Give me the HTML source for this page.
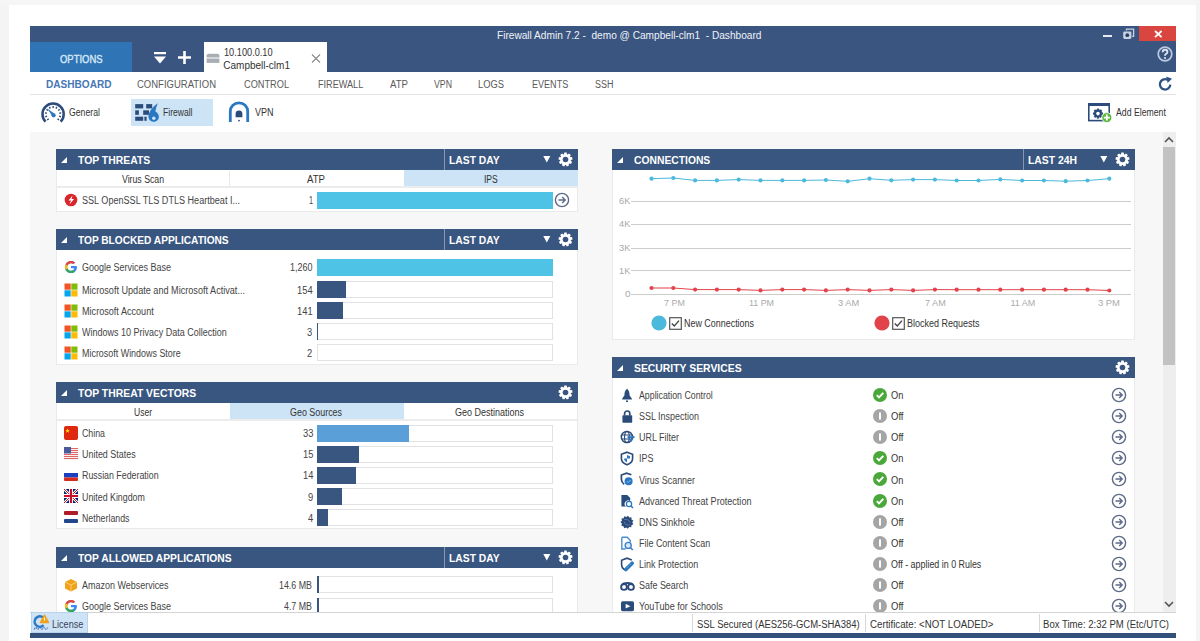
<!DOCTYPE html>
<html><head><meta charset="utf-8">
<style>
*{box-sizing:border-box;margin:0;padding:0}
html,body{width:1200px;height:641px;overflow:hidden;background:#fff;font-family:"Liberation Sans",sans-serif;color:#444;position:relative}
.a{position:absolute}
.t{position:absolute;white-space:pre;line-height:1;transform-origin:0 50%}
</style></head><body>
<div class="a" style="left:0px;top:0px;width:9px;height:641px;background:#f4f4f4;"></div>
<div class="a" style="left:0px;top:0px;width:1200px;height:5px;background:#f6f6f6;"></div>
<div class="a" style="left:1196px;top:0px;width:4px;height:641px;background:#f4f4f4;"></div>
<div class="a" style="left:30px;top:26px;width:1146px;height:46px;background:#3a5580;"></div>
<div class="t" style="left:497.30px;top:31.12px;font-size:10px;color:#f0f3f8;transform:scaleX(1.0116);">Firewall Admin 7.2 -  demo @ Campbell-clm1  - Dashboard</div>
<div class="a" style="left:1103px;top:35px;width:9px;height:2px;background:#e6ebf2;"></div>
<svg class="a" style="left:1122px;top:28px" width="13" height="12" viewBox="0 0 13 12"><path d="M4.5 2.5 V1.2 H11.6 V8.3 H10.2" fill="none" stroke="#c9d3e2" stroke-width="1.3"/><rect x="1.2" y="3.4" width="8.2" height="7.6" rx="1.4" fill="#c9d3e2"/><circle cx="5.3" cy="7.2" r="1.9" fill="#2b4068"/></svg>
<div class="a" style="left:1139px;top:26px;width:37px;height:14.5px;background:#d9463f;"></div>
<svg class="a" style="left:1154px;top:30px" width="9" height="8" viewBox="0 0 9 8"><path d="M1 1 L7.6 7.2 M7.6 1 L1 7.2" stroke="#fff" stroke-width="1.8"/></svg>
<svg class="a" style="left:1157px;top:46px" width="16" height="16" viewBox="0 0 16 16"><circle cx="8" cy="8" r="6.8" fill="none" stroke="#bccade" stroke-width="1.7"/><path d="M5.7 6.2 Q5.7 3.8 8 3.8 Q10.4 3.8 10.4 6 Q10.4 7.3 8.9 8 Q8 8.5 8 9.7" fill="none" stroke="#dde5f0" stroke-width="1.9"/><circle cx="8" cy="12" r="1.1" fill="#dde5f0"/></svg>
<div class="a" style="left:30px;top:42px;width:102px;height:30px;background:#2f74b5;"></div>
<div class="t" style="left:59.75px;top:53.88px;font-size:11.5px;color:#d8e8f8;transform:scaleX(0.8212);-webkit-text-stroke:0.4px #d8e8f8">OPTIONS</div>
<svg class="a" style="left:153px;top:51px" width="14" height="14" viewBox="0 0 14 14"><rect x="1" y="1" width="12" height="2.2" fill="#fff"/><path d="M1 5.5 L13 5.5 L7 12.5 Z" fill="#fff"/></svg>
<svg class="a" style="left:177px;top:50px" width="15" height="15" viewBox="0 0 15 15"><path d="M7.5 1 V14 M1 7.5 H14" stroke="#fff" stroke-width="2.6"/></svg>
<div class="a" style="left:204px;top:42px;width:123px;height:30px;background:#fff;"></div>
<svg class="a" style="left:206px;top:53px" width="14" height="11" viewBox="0 0 14 11"><path d="M0.6 4.6 V2.6 Q0.6 0.8 2.6 0.8 H11.4 Q13.4 0.8 13.4 2.6 V4.6 Z" fill="#a9aeb4"/><rect x="0.6" y="5.5" width="12.8" height="4.4" fill="#a9aeb4"/></svg>
<div class="t" style="left:224.00px;top:47.57px;font-size:10.3px;color:#333;transform:scaleX(0.8932);">10.100.0.10</div>
<div class="t" style="left:223.30px;top:61.41px;font-size:10px;color:#333;">Campbell-clm1</div>
<svg class="a" style="left:311px;top:54px" width="10" height="9" viewBox="0 0 10 9"><path d="M1 0.5 L9 8.5 M9 0.5 L1 8.5" stroke="#8a8a8a" stroke-width="1.1"/></svg>
<div class="t" style="left:45.50px;top:80.11px;font-size:10px;color:#4677b5;font-weight:bold;transform:scaleX(1.0077);">DASHBOARD</div>
<div class="t" style="left:137.00px;top:80.11px;font-size:10px;color:#5a5a5a;transform:scaleX(0.9502);">CONFIGURATION</div>
<div class="t" style="left:244.00px;top:80.11px;font-size:10px;color:#5a5a5a;transform:scaleX(0.9204);">CONTROL</div>
<div class="t" style="left:317.50px;top:80.11px;font-size:10px;color:#5a5a5a;transform:scaleX(0.9106);">FIREWALL</div>
<div class="t" style="left:389.80px;top:80.11px;font-size:10px;color:#5a5a5a;transform:scaleX(0.9622);">ATP</div>
<div class="t" style="left:433.50px;top:80.11px;font-size:10px;color:#5a5a5a;transform:scaleX(0.8754);">VPN</div>
<div class="t" style="left:478.00px;top:80.11px;font-size:10px;color:#5a5a5a;transform:scaleX(0.9357);">LOGS</div>
<div class="t" style="left:531.80px;top:80.11px;font-size:10px;color:#5a5a5a;transform:scaleX(0.9048);">EVENTS</div>
<div class="t" style="left:595.00px;top:80.11px;font-size:10px;color:#5a5a5a;transform:scaleX(0.8949);">SSH</div>
<div class="a" style="left:30px;top:94px;width:1146px;height:1px;background:#e4e4e4;"></div>
<svg class="a" style="left:1158px;top:76px" width="16" height="16" viewBox="0 0 16 16"><path d="M12.3 8.6 A5.2 5.2 0 1 1 9.2 3.6" fill="none" stroke="#2f5285" stroke-width="2.3"/><path d="M8.2 0.6 L14 2.8 L9.6 7 Z" fill="#2f5285"/></svg>
<div class="a" style="left:131px;top:99px;width:82px;height:27px;background:#cde4f7;"></div>
<svg class="a" style="left:40px;top:101px" width="26" height="23" viewBox="0 0 26 23"><path d="M5.6 20.7 A10.6 10.6 0 1 1 20.6 20.7" fill="none" stroke="#2b4b7a" stroke-width="2.5"/><path d="M8.65 17.65 L7.30 19.00 M7.11 15.15 L5.30 15.73 M6.88 12.21 L5.00 11.92 M8.00 9.50 L6.47 8.38 M10.24 7.59 L9.38 5.89 M13.10 6.90 L13.10 5.00 M15.96 7.59 L16.82 5.89 M18.20 9.50 L19.73 8.38 M19.32 12.21 L21.20 11.92 M19.09 15.15 L20.90 15.73 M17.55 17.65 L18.90 19.00 " stroke="#2b4b7a" stroke-width="1.4"/><path d="M7 7.2 L14.9 13 L12.6 15.6 Z" fill="#2a78c2"/><circle cx="13.6" cy="14.3" r="2.1" fill="#2a78c2"/></svg>
<div class="t" style="left:68.70px;top:108.11px;font-size:10px;color:#333;transform:scaleX(0.8686);">General</div>
<svg class="a" style="left:134px;top:102px" width="26" height="21" viewBox="0 0 26 21"><g fill="#2b4b7a"><rect x="1.2" y="2.1" width="7.999999999999999" height="4.3"/><rect x="12.2" y="2.1" width="6.0" height="4.3"/><rect x="1.2" y="8.3" width="3.7" height="4.5"/><rect x="9.2" y="8.3" width="5.800000000000001" height="4.5"/><rect x="1.2" y="14.7" width="7.999999999999999" height="4.1"/><rect x="10.4" y="14.7" width="2.1999999999999993" height="4.1"/></g><path d="M23.8 1.2 C19.6 4 16.2 8 14.8 12 C13.6 15.6 15.4 19.8 19.6 19.8 C23.2 19.8 25.2 17 24.8 14 C24.5 11.8 23 10.4 21.4 9.6 C21.8 6.6 22.8 4 23.8 1.2 Z" fill="#2a78c2"/><circle cx="19.8" cy="16.2" r="1.7" fill="#cde4f7"/></svg>
<div class="t" style="left:163.00px;top:108.31px;font-size:10px;color:#333;transform:scaleX(0.8563);">Firewall</div>
<svg class="a" style="left:228px;top:100px" width="23" height="24" viewBox="0 0 23 24"><path d="M2.3 22 V11.5 A8.7 8.7 0 0 1 19.7 11.5 V22" fill="none" stroke="#2a78c2" stroke-width="2.8"/><path d="M7.6 17.3 V13.8 A3.4 3.4 0 0 1 14.4 13.8 V17.3 Z" fill="#2b4b7a"/><circle cx="11" cy="20.6" r="0.9" fill="#2b4b7a"/></svg>
<div class="t" style="left:255.00px;top:108.31px;font-size:10px;color:#333;transform:scaleX(0.9046);">VPN</div>
<svg class="a" style="left:1087px;top:102px" width="27" height="22" viewBox="0 0 27 22"><rect x="1.8" y="1.8" width="20.4" height="16.8" fill="#fff" stroke="#2b4b7a" stroke-width="1.6"/><rect x="1" y="1" width="22" height="3" fill="#2b4b7a"/><g transform="translate(11 11.6)"><circle r="2.9" fill="none" stroke="#2b4b7a" stroke-width="2.2"/><rect x="-1.1" y="-5" width="2.2" height="2.4" fill="#2b4b7a" transform="rotate(0)"/><rect x="-1.1" y="-5" width="2.2" height="2.4" fill="#2b4b7a" transform="rotate(45)"/><rect x="-1.1" y="-5" width="2.2" height="2.4" fill="#2b4b7a" transform="rotate(90)"/><rect x="-1.1" y="-5" width="2.2" height="2.4" fill="#2b4b7a" transform="rotate(135)"/><rect x="-1.1" y="-5" width="2.2" height="2.4" fill="#2b4b7a" transform="rotate(180)"/><rect x="-1.1" y="-5" width="2.2" height="2.4" fill="#2b4b7a" transform="rotate(225)"/><rect x="-1.1" y="-5" width="2.2" height="2.4" fill="#2b4b7a" transform="rotate(270)"/><rect x="-1.1" y="-5" width="2.2" height="2.4" fill="#2b4b7a" transform="rotate(315)"/></g><circle cx="19.8" cy="15.6" r="5" fill="#5cb63e" stroke="#fff" stroke-width="0.8"/><path d="M19.8 12.6 v6 M16.8 15.6 h6" stroke="#fff" stroke-width="1.8"/></svg>
<div class="t" style="left:1115.70px;top:108.41px;font-size:10px;color:#333;transform:scaleX(0.8698);">Add Element</div>
<div class="a" style="left:30px;top:132px;width:1146px;height:480px;background:#f7f7f7;"></div>
<div class="a" style="left:1163px;top:132px;width:13px;height:480px;background:#eeeeee;"></div>
<div class="a" style="left:1163px;top:147px;width:12px;height:218px;background:#c2c2c2;"></div>
<svg class="a" style="left:1164px;top:136px" width="10" height="7" viewBox="0 0 10 7"><path d="M1 6 L5 2 L9 6" fill="none" stroke="#555" stroke-width="1.6"/></svg>
<svg class="a" style="left:1164px;top:601px" width="10" height="7" viewBox="0 0 10 7"><path d="M1 1 L5 5 L9 1" fill="none" stroke="#555" stroke-width="1.6"/></svg>
<div class="a" style="left:56px;top:149px;width:522px;height:63px;background:#fff;border:1px solid #eaeaea"></div>
<div class="a" style="left:56px;top:149px;width:522px;height:21px;background:#385680;"></div>
<svg class="a" style="left:60px;top:156px" width="8" height="8" viewBox="0 0 8 8"><path d="M1 7 L7 7 L7 1 Z" fill="#fff"/></svg>
<div class="t" style="left:78.00px;top:156.22px;font-size:10.4px;color:#fff;font-weight:bold;">TOP THREATS</div>
<div class="a" style="left:443.5px;top:149px;width:1px;height:21px;background:#8797b0;"></div>
<div class="t" style="left:448.50px;top:156.22px;font-size:10.4px;color:#fff;font-weight:bold;transform:scaleX(0.9942);">LAST DAY</div>
<svg class="a" style="left:543px;top:155px" width="8" height="8" viewBox="0 0 8 8"><path d="M0.3 1 L7.3 1 L3.8 7.4 Z" fill="#fff"/></svg>
<svg class="a" style="left:558px;top:152px" width="15" height="15" viewBox="0 0 15 15"><g fill="#fff"><circle cx="7.5" cy="7.5" r="5.4"/><path d="M6.3 0.6 H8.7 L9.1 3 H5.9 Z" transform="rotate(0 7.5 7.5)"/><path d="M6.3 0.6 H8.7 L9.1 3 H5.9 Z" transform="rotate(40 7.5 7.5)"/><path d="M6.3 0.6 H8.7 L9.1 3 H5.9 Z" transform="rotate(80 7.5 7.5)"/><path d="M6.3 0.6 H8.7 L9.1 3 H5.9 Z" transform="rotate(120 7.5 7.5)"/><path d="M6.3 0.6 H8.7 L9.1 3 H5.9 Z" transform="rotate(160 7.5 7.5)"/><path d="M6.3 0.6 H8.7 L9.1 3 H5.9 Z" transform="rotate(200 7.5 7.5)"/><path d="M6.3 0.6 H8.7 L9.1 3 H5.9 Z" transform="rotate(240 7.5 7.5)"/><path d="M6.3 0.6 H8.7 L9.1 3 H5.9 Z" transform="rotate(280 7.5 7.5)"/><path d="M6.3 0.6 H8.7 L9.1 3 H5.9 Z" transform="rotate(320 7.5 7.5)"/></g><circle cx="7.5" cy="7.5" r="2.8" fill="#385680"/></svg>
<div class="a" style="left:404px;top:170px;width:174px;height:16px;background:#cde4f7;"></div>
<div class="a" style="left:229px;top:171px;width:1px;height:15px;background:#e8e8e8;"></div>
<div class="a" style="left:57px;top:186px;width:520px;height:2px;background:#ececec;"></div>
<div class="t" style="left:122.00px;top:175.12px;font-size:10px;color:#333;transform:scaleX(0.8718);">Virus Scan</div>
<div class="t" style="left:307.00px;top:175.12px;font-size:10px;color:#333;transform:scaleX(0.9622);">ATP</div>
<div class="t" style="left:483.73px;top:175.12px;font-size:10px;color:#333;transform:scaleX(0.8531);">IPS</div>
<svg class="a" style="left:64px;top:193px" width="14" height="14" viewBox="0 0 14 14"><circle cx="7" cy="7" r="6.3" fill="#d9262c"/><path d="M8.5 2.5 L4.5 7.5 L7 7.5 L5.5 11.5 L10 6 L7.5 6 Z" fill="#fff"/></svg>
<div class="t" style="left:82.00px;top:196.12px;font-size:10px;color:#444444;transform:scaleX(0.9072);">SSL OpenSSL TLS DTLS Heartbeat I...</div>
<div class="t" style="left:308.50px;top:196.12px;font-size:10px;color:#444444;transform:scaleX(0.7192);">1</div>
<div class="a" style="left:317px;top:192px;width:236px;height:17px;background:#4ec3e6;"></div>
<svg class="a" style="left:554px;top:192px" width="16" height="16" viewBox="0 0 16 16"><circle cx="8" cy="8" r="6.6" fill="none" stroke="#5d6a88" stroke-width="1.4"/><path d="M4.5 8 H11 M8.2 5 L11.2 8 L8.2 11" fill="none" stroke="#5d6a88" stroke-width="1.4"/></svg>
<div class="a" style="left:56px;top:229px;width:522px;height:136px;background:#fff;border:1px solid #eaeaea"></div>
<div class="a" style="left:56px;top:229px;width:522px;height:21px;background:#385680;"></div>
<svg class="a" style="left:60px;top:236px" width="8" height="8" viewBox="0 0 8 8"><path d="M1 7 L7 7 L7 1 Z" fill="#fff"/></svg>
<div class="t" style="left:78.00px;top:236.22px;font-size:10.4px;color:#fff;font-weight:bold;transform:scaleX(0.9759);">TOP BLOCKED APPLICATIONS</div>
<div class="a" style="left:443.5px;top:229px;width:1px;height:21px;background:#8797b0;"></div>
<div class="t" style="left:448.50px;top:236.22px;font-size:10.4px;color:#fff;font-weight:bold;transform:scaleX(0.9942);">LAST DAY</div>
<svg class="a" style="left:543px;top:235px" width="8" height="8" viewBox="0 0 8 8"><path d="M0.3 1 L7.3 1 L3.8 7.4 Z" fill="#fff"/></svg>
<svg class="a" style="left:558px;top:232px" width="15" height="15" viewBox="0 0 15 15"><g fill="#fff"><circle cx="7.5" cy="7.5" r="5.4"/><path d="M6.3 0.6 H8.7 L9.1 3 H5.9 Z" transform="rotate(0 7.5 7.5)"/><path d="M6.3 0.6 H8.7 L9.1 3 H5.9 Z" transform="rotate(40 7.5 7.5)"/><path d="M6.3 0.6 H8.7 L9.1 3 H5.9 Z" transform="rotate(80 7.5 7.5)"/><path d="M6.3 0.6 H8.7 L9.1 3 H5.9 Z" transform="rotate(120 7.5 7.5)"/><path d="M6.3 0.6 H8.7 L9.1 3 H5.9 Z" transform="rotate(160 7.5 7.5)"/><path d="M6.3 0.6 H8.7 L9.1 3 H5.9 Z" transform="rotate(200 7.5 7.5)"/><path d="M6.3 0.6 H8.7 L9.1 3 H5.9 Z" transform="rotate(240 7.5 7.5)"/><path d="M6.3 0.6 H8.7 L9.1 3 H5.9 Z" transform="rotate(280 7.5 7.5)"/><path d="M6.3 0.6 H8.7 L9.1 3 H5.9 Z" transform="rotate(320 7.5 7.5)"/></g><circle cx="7.5" cy="7.5" r="2.8" fill="#385680"/></svg>
<svg class="a" style="left:64px;top:260px" width="14" height="14" viewBox="0 0 14 14"><path d="M12.3 6 H7 V8.2 H10.2 C9.8 9.8 8.6 10.8 7 10.8 C4.9 10.8 3.2 9.1 3.2 7 C3.2 4.9 4.9 3.2 7 3.2 C8 3.2 8.8 3.5 9.5 4.1 L11.1 2.5 C10 1.5 8.6 0.9 7 0.9 C3.6 0.9 0.9 3.6 0.9 7 C0.9 10.4 3.6 13.1 7 13.1 C10.4 13.1 13 10.6 13 7 C13 6.6 12.9 6.3 12.3 6 Z" fill="#4285f4"/><path d="M1.6 4.2 L3.5 5.6 C4 4.2 5.4 3.2 7 3.2 C8 3.2 8.8 3.5 9.5 4.1 L11.1 2.5 C10 1.5 8.6 0.9 7 0.9 C4.6 0.9 2.6 2.2 1.6 4.2 Z" fill="#ea4335"/><path d="M1.6 4.2 C1.1 5 0.9 6 0.9 7 C0.9 8 1.1 9 1.6 9.8 L3.5 8.4 C3.3 8 3.2 7.5 3.2 7 C3.2 6.5 3.3 6 3.5 5.6 Z" fill="#fbbc05"/><path d="M1.6 9.8 C2.6 11.8 4.6 13.1 7 13.1 C8.6 13.1 10 12.6 11 11.7 L9.2 10.3 C8.6 10.6 7.9 10.8 7 10.8 C5.4 10.8 4 9.8 3.5 8.4 Z" fill="#34a853"/></svg>
<div class="t" style="left:81.50px;top:263.42px;font-size:10px;color:#444444;transform:scaleX(0.8995);">Google Services Base</div>
<div class="t" style="left:290.00px;top:263.42px;font-size:10px;color:#444444;transform:scaleX(0.8991);">1,260</div>
<div class="a" style="left:317px;top:259px;width:236px;height:17px;background:#fff;border:1px solid #e2e2e2"></div>
<div class="a" style="left:317px;top:259px;width:236px;height:17px;background:#4ec3e6;"></div>
<svg class="a" style="left:64px;top:283px" width="14" height="14" viewBox="0 0 14 14"><rect x="0.5" y="0.5" width="6.2" height="6.2" fill="#f35325"/><rect x="7.3" y="0.5" width="6.2" height="6.2" fill="#81bc06"/><rect x="0.5" y="7.3" width="6.2" height="6.2" fill="#05a6f0"/><rect x="7.3" y="7.3" width="6.2" height="6.2" fill="#ffba08"/></svg>
<div class="t" style="left:81.50px;top:285.72px;font-size:10px;color:#444444;transform:scaleX(0.9108);">Microsoft Update and Microsoft Activat...</div>
<div class="t" style="left:296.90px;top:285.72px;font-size:10px;color:#444444;transform:scaleX(0.9350);">154</div>
<div class="a" style="left:317px;top:281px;width:236px;height:17px;background:#fff;border:1px solid #e2e2e2"></div>
<div class="a" style="left:317px;top:281px;width:28.5px;height:17px;background:#385680;"></div>
<svg class="a" style="left:64px;top:304px" width="14" height="14" viewBox="0 0 14 14"><rect x="0.5" y="0.5" width="6.2" height="6.2" fill="#f35325"/><rect x="7.3" y="0.5" width="6.2" height="6.2" fill="#81bc06"/><rect x="0.5" y="7.3" width="6.2" height="6.2" fill="#05a6f0"/><rect x="7.3" y="7.3" width="6.2" height="6.2" fill="#ffba08"/></svg>
<div class="t" style="left:81.50px;top:306.81px;font-size:10px;color:#444444;transform:scaleX(0.9091);">Microsoft Account</div>
<div class="t" style="left:296.90px;top:306.81px;font-size:10px;color:#444444;transform:scaleX(0.9350);">141</div>
<div class="a" style="left:317px;top:302px;width:236px;height:17px;background:#fff;border:1px solid #e2e2e2"></div>
<div class="a" style="left:317px;top:302px;width:26px;height:17px;background:#385680;"></div>
<svg class="a" style="left:64px;top:325px" width="14" height="14" viewBox="0 0 14 14"><rect x="0.5" y="0.5" width="6.2" height="6.2" fill="#f35325"/><rect x="7.3" y="0.5" width="6.2" height="6.2" fill="#81bc06"/><rect x="0.5" y="7.3" width="6.2" height="6.2" fill="#05a6f0"/><rect x="7.3" y="7.3" width="6.2" height="6.2" fill="#ffba08"/></svg>
<div class="t" style="left:81.50px;top:327.81px;font-size:10px;color:#444444;transform:scaleX(0.9012);">Windows 10 Privacy Data Collection</div>
<div class="t" style="left:307.30px;top:327.81px;font-size:10px;color:#444444;transform:scaleX(0.9350);">3</div>
<div class="a" style="left:317px;top:323px;width:236px;height:17px;background:#fff;border:1px solid #e2e2e2"></div>
<div class="a" style="left:317px;top:323px;width:1px;height:17px;background:#385680;"></div>
<svg class="a" style="left:64px;top:346px" width="14" height="14" viewBox="0 0 14 14"><rect x="0.5" y="0.5" width="6.2" height="6.2" fill="#f35325"/><rect x="7.3" y="0.5" width="6.2" height="6.2" fill="#81bc06"/><rect x="0.5" y="7.3" width="6.2" height="6.2" fill="#05a6f0"/><rect x="7.3" y="7.3" width="6.2" height="6.2" fill="#ffba08"/></svg>
<div class="t" style="left:81.50px;top:348.62px;font-size:10px;color:#444444;transform:scaleX(0.8930);">Microsoft Windows Store</div>
<div class="t" style="left:307.30px;top:348.62px;font-size:10px;color:#444444;transform:scaleX(0.9350);">2</div>
<div class="a" style="left:317px;top:344px;width:236px;height:17px;background:#fff;border:1px solid #e2e2e2"></div>
<div class="a" style="left:56px;top:382px;width:522px;height:147px;background:#fff;border:1px solid #eaeaea"></div>
<div class="a" style="left:56px;top:382px;width:522px;height:21px;background:#385680;"></div>
<svg class="a" style="left:60px;top:389px" width="8" height="8" viewBox="0 0 8 8"><path d="M1 7 L7 7 L7 1 Z" fill="#fff"/></svg>
<div class="t" style="left:78.00px;top:389.22px;font-size:10.4px;color:#fff;font-weight:bold;">TOP THREAT VECTORS</div>
<svg class="a" style="left:558px;top:385px" width="15" height="15" viewBox="0 0 15 15"><g fill="#fff"><circle cx="7.5" cy="7.5" r="5.4"/><path d="M6.3 0.6 H8.7 L9.1 3 H5.9 Z" transform="rotate(0 7.5 7.5)"/><path d="M6.3 0.6 H8.7 L9.1 3 H5.9 Z" transform="rotate(40 7.5 7.5)"/><path d="M6.3 0.6 H8.7 L9.1 3 H5.9 Z" transform="rotate(80 7.5 7.5)"/><path d="M6.3 0.6 H8.7 L9.1 3 H5.9 Z" transform="rotate(120 7.5 7.5)"/><path d="M6.3 0.6 H8.7 L9.1 3 H5.9 Z" transform="rotate(160 7.5 7.5)"/><path d="M6.3 0.6 H8.7 L9.1 3 H5.9 Z" transform="rotate(200 7.5 7.5)"/><path d="M6.3 0.6 H8.7 L9.1 3 H5.9 Z" transform="rotate(240 7.5 7.5)"/><path d="M6.3 0.6 H8.7 L9.1 3 H5.9 Z" transform="rotate(280 7.5 7.5)"/><path d="M6.3 0.6 H8.7 L9.1 3 H5.9 Z" transform="rotate(320 7.5 7.5)"/></g><circle cx="7.5" cy="7.5" r="2.8" fill="#385680"/></svg>
<div class="a" style="left:230px;top:403px;width:174px;height:16px;background:#cde4f7;"></div>
<div class="a" style="left:57px;top:419px;width:520px;height:2px;background:#ececec;"></div>
<div class="t" style="left:133.50px;top:408.12px;font-size:10px;color:#333;transform:scaleX(0.8525);">User</div>
<div class="t" style="left:290.00px;top:408.12px;font-size:10px;color:#333;transform:scaleX(0.8910);">Geo Sources</div>
<div class="t" style="left:455.00px;top:408.12px;font-size:10px;color:#333;transform:scaleX(0.8995);">Geo Destinations</div>
<svg class="a" style="left:64px;top:426px" width="14" height="14" viewBox="0 0 14 14"><rect width="14" height="14" rx="2" fill="#de2910"/><path d="M3.5 2.5 l0.7 1.5 1.6 0.1 -1.2 1 0.4 1.6 -1.5 -0.9 -1.4 0.9 0.4 -1.6 -1.2 -1 1.6 -0.1z" fill="#ffde00"/></svg>
<div class="t" style="left:81.50px;top:429.22px;font-size:10px;color:#444444;transform:scaleX(0.8803);">China</div>
<div class="t" style="left:302.60px;top:429.22px;font-size:10px;color:#444444;transform:scaleX(0.9350);">33</div>
<div class="a" style="left:317px;top:425px;width:236px;height:17px;background:#fff;border:1px solid #e2e2e2"></div>
<div class="a" style="left:317px;top:425px;width:92.3px;height:17px;background:#5a9fd8;"></div>
<svg class="a" style="left:64px;top:447px" width="14" height="14" viewBox="0 0 14 14"><rect width="14" height="14" rx="2" fill="#fff"/><rect y="1" width="14" height="1.1" fill="#d66"/><rect y="3" width="14" height="1.1" fill="#d66"/><rect y="5" width="14" height="1.1" fill="#d66"/><rect y="7" width="14" height="1.1" fill="#d66"/><rect y="9" width="14" height="1.1" fill="#d66"/><rect y="11" width="14" height="1.1" fill="#d66"/><rect width="7" height="6.5" fill="#4a5a9a"/></svg>
<div class="t" style="left:81.50px;top:450.32px;font-size:10px;color:#444444;transform:scaleX(0.8928);">United States</div>
<div class="t" style="left:302.60px;top:450.32px;font-size:10px;color:#444444;transform:scaleX(0.9350);">15</div>
<div class="a" style="left:317px;top:446px;width:236px;height:17px;background:#fff;border:1px solid #e2e2e2"></div>
<div class="a" style="left:317px;top:446px;width:42px;height:17px;background:#385680;"></div>
<svg class="a" style="left:64px;top:468px" width="14" height="14" viewBox="0 0 14 14"><rect y="1" width="14" height="4" fill="#fff"/><rect y="5" width="14" height="4.5" fill="#1c3fc0"/><rect y="9.5" width="14" height="3.5" rx="1" fill="#d52b1e"/></svg>
<div class="t" style="left:81.50px;top:471.42px;font-size:10px;color:#444444;transform:scaleX(0.8834);">Russian Federation</div>
<div class="t" style="left:302.60px;top:471.42px;font-size:10px;color:#444444;transform:scaleX(0.9350);">14</div>
<div class="a" style="left:317px;top:467px;width:236px;height:17px;background:#fff;border:1px solid #e2e2e2"></div>
<div class="a" style="left:317px;top:467px;width:39px;height:17px;background:#385680;"></div>
<svg class="a" style="left:64px;top:489px" width="14" height="14" viewBox="0 0 14 14"><rect width="14" height="14" rx="2" fill="#012169"/><path d="M0 0 L14 14 M14 0 L0 14" stroke="#fff" stroke-width="2.6"/><path d="M0 0 L14 14 M14 0 L0 14" stroke="#c8102e" stroke-width="1"/><path d="M7 0 V14 M0 7 H14" stroke="#fff" stroke-width="4"/><path d="M7 0 V14 M0 7 H14" stroke="#c8102e" stroke-width="2.2"/></svg>
<div class="t" style="left:81.50px;top:492.52px;font-size:10px;color:#444444;transform:scaleX(0.8840);">United Kingdom</div>
<div class="t" style="left:307.80px;top:492.52px;font-size:10px;color:#444444;transform:scaleX(0.9350);">9</div>
<div class="a" style="left:317px;top:488px;width:236px;height:17px;background:#fff;border:1px solid #e2e2e2"></div>
<div class="a" style="left:317px;top:488px;width:25px;height:17px;background:#385680;"></div>
<svg class="a" style="left:64px;top:510px" width="14" height="14" viewBox="0 0 14 14"><rect y="1" width="14" height="4" rx="1" fill="#ae1c28"/><rect y="5" width="14" height="4" fill="#fff"/><rect y="9" width="14" height="4" rx="1" fill="#21468b"/></svg>
<div class="t" style="left:81.50px;top:513.62px;font-size:10px;color:#444444;transform:scaleX(0.8809);">Netherlands</div>
<div class="t" style="left:307.80px;top:513.62px;font-size:10px;color:#444444;transform:scaleX(0.9350);">4</div>
<div class="a" style="left:317px;top:509px;width:236px;height:17px;background:#fff;border:1px solid #e2e2e2"></div>
<div class="a" style="left:317px;top:509px;width:10.8px;height:17px;background:#385680;"></div>
<div class="a" style="left:56px;top:547px;width:522px;height:80px;background:#fff;border:1px solid #eaeaea"></div>
<div class="a" style="left:56px;top:547px;width:522px;height:21px;background:#385680;"></div>
<svg class="a" style="left:60px;top:554px" width="8" height="8" viewBox="0 0 8 8"><path d="M1 7 L7 7 L7 1 Z" fill="#fff"/></svg>
<div class="t" style="left:78.00px;top:554.22px;font-size:10.4px;color:#fff;font-weight:bold;transform:scaleX(0.9901);">TOP ALLOWED APPLICATIONS</div>
<div class="a" style="left:443.5px;top:547px;width:1px;height:21px;background:#8797b0;"></div>
<div class="t" style="left:448.50px;top:554.22px;font-size:10.4px;color:#fff;font-weight:bold;transform:scaleX(0.9942);">LAST DAY</div>
<svg class="a" style="left:543px;top:553px" width="8" height="8" viewBox="0 0 8 8"><path d="M0.3 1 L7.3 1 L3.8 7.4 Z" fill="#fff"/></svg>
<svg class="a" style="left:558px;top:550px" width="15" height="15" viewBox="0 0 15 15"><g fill="#fff"><circle cx="7.5" cy="7.5" r="5.4"/><path d="M6.3 0.6 H8.7 L9.1 3 H5.9 Z" transform="rotate(0 7.5 7.5)"/><path d="M6.3 0.6 H8.7 L9.1 3 H5.9 Z" transform="rotate(40 7.5 7.5)"/><path d="M6.3 0.6 H8.7 L9.1 3 H5.9 Z" transform="rotate(80 7.5 7.5)"/><path d="M6.3 0.6 H8.7 L9.1 3 H5.9 Z" transform="rotate(120 7.5 7.5)"/><path d="M6.3 0.6 H8.7 L9.1 3 H5.9 Z" transform="rotate(160 7.5 7.5)"/><path d="M6.3 0.6 H8.7 L9.1 3 H5.9 Z" transform="rotate(200 7.5 7.5)"/><path d="M6.3 0.6 H8.7 L9.1 3 H5.9 Z" transform="rotate(240 7.5 7.5)"/><path d="M6.3 0.6 H8.7 L9.1 3 H5.9 Z" transform="rotate(280 7.5 7.5)"/><path d="M6.3 0.6 H8.7 L9.1 3 H5.9 Z" transform="rotate(320 7.5 7.5)"/></g><circle cx="7.5" cy="7.5" r="2.8" fill="#385680"/></svg>
<svg class="a" style="left:64px;top:578px" width="14" height="14" viewBox="0 0 14 14"><path d="M7 1 L13 4 V10.5 L7 13.5 L1 10.5 V4 Z" fill="#f0a21a"/><path d="M1 4 L7 7 L13 4 M7 7 V13.5" stroke="#fcd27a" stroke-width="0.9" fill="none"/></svg>
<div class="t" style="left:81.50px;top:581.12px;font-size:10px;color:#444444;transform:scaleX(0.8972);">Amazon Webservices</div>
<div class="t" style="left:279.30px;top:581.12px;font-size:10px;color:#444444;transform:scaleX(0.8861);">14.6 MB</div>
<div class="a" style="left:317px;top:576px;width:236px;height:17px;background:#fff;border:1px solid #e2e2e2"></div>
<div class="a" style="left:317px;top:576px;width:2px;height:17px;background:#385680;"></div>
<svg class="a" style="left:64px;top:599px" width="14" height="14" viewBox="0 0 14 14"><path d="M12.3 6 H7 V8.2 H10.2 C9.8 9.8 8.6 10.8 7 10.8 C4.9 10.8 3.2 9.1 3.2 7 C3.2 4.9 4.9 3.2 7 3.2 C8 3.2 8.8 3.5 9.5 4.1 L11.1 2.5 C10 1.5 8.6 0.9 7 0.9 C3.6 0.9 0.9 3.6 0.9 7 C0.9 10.4 3.6 13.1 7 13.1 C10.4 13.1 13 10.6 13 7 C13 6.6 12.9 6.3 12.3 6 Z" fill="#4285f4"/><path d="M1.6 4.2 L3.5 5.6 C4 4.2 5.4 3.2 7 3.2 C8 3.2 8.8 3.5 9.5 4.1 L11.1 2.5 C10 1.5 8.6 0.9 7 0.9 C4.6 0.9 2.6 2.2 1.6 4.2 Z" fill="#ea4335"/><path d="M1.6 4.2 C1.1 5 0.9 6 0.9 7 C0.9 8 1.1 9 1.6 9.8 L3.5 8.4 C3.3 8 3.2 7.5 3.2 7 C3.2 6.5 3.3 6 3.5 5.6 Z" fill="#fbbc05"/><path d="M1.6 9.8 C2.6 11.8 4.6 13.1 7 13.1 C8.6 13.1 10 12.6 11 11.7 L9.2 10.3 C8.6 10.6 7.9 10.8 7 10.8 C5.4 10.8 4 9.8 3.5 8.4 Z" fill="#34a853"/></svg>
<div class="t" style="left:81.50px;top:602.12px;font-size:10px;color:#444444;transform:scaleX(0.8995);">Google Services Base</div>
<div class="t" style="left:284.30px;top:602.12px;font-size:10px;color:#444444;transform:scaleX(0.8838);">4.7 MB</div>
<div class="a" style="left:317px;top:598px;width:236px;height:17px;background:#fff;border:1px solid #e2e2e2"></div>
<div class="a" style="left:317px;top:598px;width:2px;height:17px;background:#385680;"></div>
<div class="a" style="left:612px;top:149px;width:523px;height:191px;background:#fff;border:1px solid #eaeaea"></div>
<div class="a" style="left:612px;top:149px;width:523px;height:21px;background:#385680;"></div>
<svg class="a" style="left:616px;top:156px" width="8" height="8" viewBox="0 0 8 8"><path d="M1 7 L7 7 L7 1 Z" fill="#fff"/></svg>
<div class="t" style="left:634.00px;top:156.22px;font-size:10.4px;color:#fff;font-weight:bold;transform:scaleX(0.9929);">CONNECTIONS</div>
<div class="a" style="left:1023px;top:149px;width:1px;height:21px;background:#8797b0;"></div>
<div class="t" style="left:1028.00px;top:156.22px;font-size:10.4px;color:#fff;font-weight:bold;">LAST 24H</div>
<svg class="a" style="left:1100px;top:155px" width="8" height="8" viewBox="0 0 8 8"><path d="M0.3 1 L7.3 1 L3.8 7.4 Z" fill="#fff"/></svg>
<svg class="a" style="left:1115px;top:152px" width="15" height="15" viewBox="0 0 15 15"><g fill="#fff"><circle cx="7.5" cy="7.5" r="5.4"/><path d="M6.3 0.6 H8.7 L9.1 3 H5.9 Z" transform="rotate(0 7.5 7.5)"/><path d="M6.3 0.6 H8.7 L9.1 3 H5.9 Z" transform="rotate(40 7.5 7.5)"/><path d="M6.3 0.6 H8.7 L9.1 3 H5.9 Z" transform="rotate(80 7.5 7.5)"/><path d="M6.3 0.6 H8.7 L9.1 3 H5.9 Z" transform="rotate(120 7.5 7.5)"/><path d="M6.3 0.6 H8.7 L9.1 3 H5.9 Z" transform="rotate(160 7.5 7.5)"/><path d="M6.3 0.6 H8.7 L9.1 3 H5.9 Z" transform="rotate(200 7.5 7.5)"/><path d="M6.3 0.6 H8.7 L9.1 3 H5.9 Z" transform="rotate(240 7.5 7.5)"/><path d="M6.3 0.6 H8.7 L9.1 3 H5.9 Z" transform="rotate(280 7.5 7.5)"/><path d="M6.3 0.6 H8.7 L9.1 3 H5.9 Z" transform="rotate(320 7.5 7.5)"/></g><circle cx="7.5" cy="7.5" r="2.8" fill="#385680"/></svg>
<div class="a" style="left:631px;top:201px;width:500px;height:1px;background:#cccccc;"></div>
<div class="t" style="left:618.70px;top:197.40px;font-size:9px;color:#a8a8a8;transform:scaleX(1.0265);">6K</div>
<div class="a" style="left:631px;top:224px;width:500px;height:1px;background:#cccccc;"></div>
<div class="t" style="left:618.70px;top:220.20px;font-size:9px;color:#a8a8a8;transform:scaleX(1.0265);">4K</div>
<div class="a" style="left:631px;top:248px;width:500px;height:1px;background:#cccccc;"></div>
<div class="t" style="left:618.70px;top:244.20px;font-size:9px;color:#a8a8a8;transform:scaleX(1.0265);">3K</div>
<div class="a" style="left:631px;top:270px;width:500px;height:1px;background:#cccccc;"></div>
<div class="t" style="left:618.70px;top:267.00px;font-size:9px;color:#a8a8a8;transform:scaleX(1.0265);">1K</div>
<div class="a" style="left:631px;top:294px;width:500px;height:1px;background:#cccccc;"></div>
<div class="t" style="left:624.50px;top:290.40px;font-size:9px;color:#a8a8a8;transform:scaleX(1.0988);">0</div>
<div class="t" style="left:664.00px;top:298.90px;font-size:9px;color:#ababab;transform:scaleX(0.9902);">7 PM</div>
<div class="t" style="left:749.00px;top:298.90px;font-size:9px;color:#ababab;transform:scaleX(0.9864);">11 PM</div>
<div class="t" style="left:837.60px;top:298.90px;font-size:9px;color:#ababab;transform:scaleX(1.0337);">3 AM</div>
<div class="t" style="left:925.20px;top:298.90px;font-size:9px;color:#ababab;transform:scaleX(1.0142);">7 AM</div>
<div class="t" style="left:1010.40px;top:298.90px;font-size:9px;color:#ababab;">11 AM</div>
<div class="t" style="left:1098.30px;top:298.90px;font-size:9px;color:#ababab;transform:scaleX(1.0426);">3 PM</div>
<svg class="a" style="left:613px;top:170px" width="522" height="150" viewBox="0 0 522 150"><polyline points="38.5,8.7 60.3,8.0 82.1,10.4 103.9,10.4 125.7,9.6 147.5,10.4 169.3,10.4 191.1,10.4 212.9,10.0 234.7,11.3 256.5,8.7 278.3,10.3 300.1,9.6 321.9,9.6 343.7,10.5 365.5,10.5 387.3,9.4 409.1,10.5 430.9,10.5 452.7,11.2 474.5,10.5 496.3,8.7" fill="none" stroke="#4bb9dc" stroke-width="1"/><circle cx="38.5" cy="8.7" r="2.1" fill="#4bb9dc"/><circle cx="60.3" cy="8.0" r="2.1" fill="#4bb9dc"/><circle cx="82.1" cy="10.4" r="2.1" fill="#4bb9dc"/><circle cx="103.9" cy="10.4" r="2.1" fill="#4bb9dc"/><circle cx="125.7" cy="9.6" r="2.1" fill="#4bb9dc"/><circle cx="147.5" cy="10.4" r="2.1" fill="#4bb9dc"/><circle cx="169.3" cy="10.4" r="2.1" fill="#4bb9dc"/><circle cx="191.1" cy="10.4" r="2.1" fill="#4bb9dc"/><circle cx="212.9" cy="10.0" r="2.1" fill="#4bb9dc"/><circle cx="234.7" cy="11.3" r="2.1" fill="#4bb9dc"/><circle cx="256.5" cy="8.7" r="2.1" fill="#4bb9dc"/><circle cx="278.3" cy="10.3" r="2.1" fill="#4bb9dc"/><circle cx="300.1" cy="9.6" r="2.1" fill="#4bb9dc"/><circle cx="321.9" cy="9.6" r="2.1" fill="#4bb9dc"/><circle cx="343.7" cy="10.5" r="2.1" fill="#4bb9dc"/><circle cx="365.5" cy="10.5" r="2.1" fill="#4bb9dc"/><circle cx="387.3" cy="9.4" r="2.1" fill="#4bb9dc"/><circle cx="409.1" cy="10.5" r="2.1" fill="#4bb9dc"/><circle cx="430.9" cy="10.5" r="2.1" fill="#4bb9dc"/><circle cx="452.7" cy="11.2" r="2.1" fill="#4bb9dc"/><circle cx="474.5" cy="10.5" r="2.1" fill="#4bb9dc"/><circle cx="496.3" cy="8.7" r="2.1" fill="#4bb9dc"/></svg>
<svg class="a" style="left:613px;top:170px" width="522" height="150" viewBox="0 0 522 150"><polyline points="38.5,118.0 60.3,118.0 82.1,119.6 103.9,119.6 125.7,119.6 147.5,120.4 169.3,119.6 191.1,119.6 212.9,120.4 234.7,119.6 256.5,120.4 278.3,119.6 300.1,120.4 321.9,119.6 343.7,119.7 365.5,119.7 387.3,119.7 409.1,119.7 430.9,119.7 452.7,119.7 474.5,119.7 496.3,120.5" fill="none" stroke="#e2434b" stroke-width="1"/><circle cx="38.5" cy="118.0" r="2.1" fill="#e2434b"/><circle cx="60.3" cy="118.0" r="2.1" fill="#e2434b"/><circle cx="82.1" cy="119.6" r="2.1" fill="#e2434b"/><circle cx="103.9" cy="119.6" r="2.1" fill="#e2434b"/><circle cx="125.7" cy="119.6" r="2.1" fill="#e2434b"/><circle cx="147.5" cy="120.4" r="2.1" fill="#e2434b"/><circle cx="169.3" cy="119.6" r="2.1" fill="#e2434b"/><circle cx="191.1" cy="119.6" r="2.1" fill="#e2434b"/><circle cx="212.9" cy="120.4" r="2.1" fill="#e2434b"/><circle cx="234.7" cy="119.6" r="2.1" fill="#e2434b"/><circle cx="256.5" cy="120.4" r="2.1" fill="#e2434b"/><circle cx="278.3" cy="119.6" r="2.1" fill="#e2434b"/><circle cx="300.1" cy="120.4" r="2.1" fill="#e2434b"/><circle cx="321.9" cy="119.6" r="2.1" fill="#e2434b"/><circle cx="343.7" cy="119.7" r="2.1" fill="#e2434b"/><circle cx="365.5" cy="119.7" r="2.1" fill="#e2434b"/><circle cx="387.3" cy="119.7" r="2.1" fill="#e2434b"/><circle cx="409.1" cy="119.7" r="2.1" fill="#e2434b"/><circle cx="430.9" cy="119.7" r="2.1" fill="#e2434b"/><circle cx="452.7" cy="119.7" r="2.1" fill="#e2434b"/><circle cx="474.5" cy="119.7" r="2.1" fill="#e2434b"/><circle cx="496.3" cy="120.5" r="2.1" fill="#e2434b"/></svg>
<svg class="a" style="left:651px;top:315px" width="16" height="16" viewBox="0 0 16 16"><circle cx="8" cy="8" r="7.6" fill="#4bb9dc"/></svg>
<svg class="a" style="left:669px;top:317px" width="13" height="13" viewBox="0 0 13 13"><rect x="0.7" y="0.7" width="11.6" height="11.6" fill="#fff" stroke="#555" stroke-width="1.2"/><path d="M2.8 6.5 L5.3 9 L10 3.6" fill="none" stroke="#444" stroke-width="1.4"/></svg>
<div class="t" style="left:683.60px;top:319.42px;font-size:10px;color:#333;transform:scaleX(0.8931);">New Connections</div>
<svg class="a" style="left:874px;top:315px" width="16" height="16" viewBox="0 0 16 16"><circle cx="8" cy="8" r="7.6" fill="#e2434b"/></svg>
<svg class="a" style="left:892px;top:317px" width="13" height="13" viewBox="0 0 13 13"><rect x="0.7" y="0.7" width="11.6" height="11.6" fill="#fff" stroke="#555" stroke-width="1.2"/><path d="M2.8 6.5 L5.3 9 L10 3.6" fill="none" stroke="#444" stroke-width="1.4"/></svg>
<div class="t" style="left:906.50px;top:319.42px;font-size:10px;color:#333;transform:scaleX(0.8995);">Blocked Requests</div>
<div class="a" style="left:612px;top:357px;width:523px;height:280px;background:#fff;border:1px solid #eaeaea"></div>
<div class="a" style="left:612px;top:357px;width:523px;height:21px;background:#385680;"></div>
<svg class="a" style="left:616px;top:364px" width="8" height="8" viewBox="0 0 8 8"><path d="M1 7 L7 7 L7 1 Z" fill="#fff"/></svg>
<div class="t" style="left:634.00px;top:364.22px;font-size:10.4px;color:#fff;font-weight:bold;">SECURITY SERVICES</div>
<svg class="a" style="left:1115px;top:360px" width="15" height="15" viewBox="0 0 15 15"><g fill="#fff"><circle cx="7.5" cy="7.5" r="5.4"/><path d="M6.3 0.6 H8.7 L9.1 3 H5.9 Z" transform="rotate(0 7.5 7.5)"/><path d="M6.3 0.6 H8.7 L9.1 3 H5.9 Z" transform="rotate(40 7.5 7.5)"/><path d="M6.3 0.6 H8.7 L9.1 3 H5.9 Z" transform="rotate(80 7.5 7.5)"/><path d="M6.3 0.6 H8.7 L9.1 3 H5.9 Z" transform="rotate(120 7.5 7.5)"/><path d="M6.3 0.6 H8.7 L9.1 3 H5.9 Z" transform="rotate(160 7.5 7.5)"/><path d="M6.3 0.6 H8.7 L9.1 3 H5.9 Z" transform="rotate(200 7.5 7.5)"/><path d="M6.3 0.6 H8.7 L9.1 3 H5.9 Z" transform="rotate(240 7.5 7.5)"/><path d="M6.3 0.6 H8.7 L9.1 3 H5.9 Z" transform="rotate(280 7.5 7.5)"/><path d="M6.3 0.6 H8.7 L9.1 3 H5.9 Z" transform="rotate(320 7.5 7.5)"/></g><circle cx="7.5" cy="7.5" r="2.8" fill="#385680"/></svg>
<svg class="a" style="left:620px;top:388px" width="16" height="16" viewBox="0 0 16 16"><path d="M7 0.8 C9.2 2.6 9.6 5 9.6 7.6 L11.8 10.4 V11.6 H2.2 V10.4 L4.4 7.6 C4.4 5 4.8 2.6 7 0.8 Z" fill="#2b4b7a"/><circle cx="7" cy="13.2" r="1" fill="#2b4b7a"/></svg>
<div class="t" style="left:638.75px;top:391.12px;font-size:10px;color:#444444;transform:scaleX(0.8786);">Application Control</div>
<svg class="a" style="left:873px;top:388px" width="14" height="14" viewBox="0 0 14 14"><circle cx="7" cy="7" r="7" fill="#4aa83a"/><path d="M3.8 7.2 L6 9.4 L10.3 4.9" fill="none" stroke="#fff" stroke-width="1.9"/></svg>
<div class="t" style="left:890.50px;top:391.12px;font-size:10px;color:#333;transform:scaleX(0.9220);">On</div>
<svg class="a" style="left:1111px;top:387.0px" width="16" height="16" viewBox="0 0 16 16"><circle cx="8" cy="8" r="6.6" fill="none" stroke="#5d6a88" stroke-width="1.4"/><path d="M4.5 8 H11 M8.2 5 L11.2 8 L8.2 11" fill="none" stroke="#5d6a88" stroke-width="1.4"/></svg>
<svg class="a" style="left:620px;top:409px" width="16" height="16" viewBox="0 0 16 16"><path d="M4.6 6.4 V4.6 A2.6 2.6 0 0 1 9.8 4.6 V6.4" fill="none" stroke="#2b4b7a" stroke-width="1.7"/><rect x="2.4" y="6.2" width="9.8" height="7.6" rx="0.8" fill="#2b4b7a"/></svg>
<div class="t" style="left:638.75px;top:412.22px;font-size:10px;color:#444444;transform:scaleX(0.8969);">SSL Inspection</div>
<svg class="a" style="left:873px;top:409px" width="14" height="14" viewBox="0 0 14 14"><circle cx="7" cy="7" r="7" fill="#a5a5a5"/><rect x="6" y="3.3" width="2" height="7.4" rx="0.8" fill="#fff"/></svg>
<div class="t" style="left:890.50px;top:412.22px;font-size:10px;color:#333;transform:scaleX(0.9503);">Off</div>
<svg class="a" style="left:1111px;top:408.1px" width="16" height="16" viewBox="0 0 16 16"><circle cx="8" cy="8" r="6.6" fill="none" stroke="#5d6a88" stroke-width="1.4"/><path d="M4.5 8 H11 M8.2 5 L11.2 8 L8.2 11" fill="none" stroke="#5d6a88" stroke-width="1.4"/></svg>
<svg class="a" style="left:620px;top:430px" width="16" height="16" viewBox="0 0 16 16"><circle cx="6.9" cy="7" r="5.6" fill="none" stroke="#2b4b7a" stroke-width="1.5"/><ellipse cx="6.9" cy="7" rx="2.4" ry="5.6" fill="none" stroke="#2b4b7a" stroke-width="1.1"/><path d="M1.5 5 H12 M1.5 9 H12" stroke="#2b4b7a" stroke-width="1.1"/><rect x="7.5" y="6.2" width="7" height="2" fill="#2a78c2"/><path d="M8.6 9.3 H13.4 L11 12 Z" fill="#2a78c2"/></svg>
<div class="t" style="left:638.75px;top:433.31px;font-size:10px;color:#444444;transform:scaleX(0.8950);">URL Filter</div>
<svg class="a" style="left:873px;top:430px" width="14" height="14" viewBox="0 0 14 14"><circle cx="7" cy="7" r="7" fill="#a5a5a5"/><rect x="6" y="3.3" width="2" height="7.4" rx="0.8" fill="#fff"/></svg>
<div class="t" style="left:890.50px;top:433.31px;font-size:10px;color:#333;transform:scaleX(0.9503);">Off</div>
<svg class="a" style="left:1111px;top:429.2px" width="16" height="16" viewBox="0 0 16 16"><circle cx="8" cy="8" r="6.6" fill="none" stroke="#5d6a88" stroke-width="1.4"/><path d="M4.5 8 H11 M8.2 5 L11.2 8 L8.2 11" fill="none" stroke="#5d6a88" stroke-width="1.4"/></svg>
<svg class="a" style="left:620px;top:451px" width="16" height="16" viewBox="0 0 16 16"><path d="M7 1.2 L12.6 3.2 V7.4 C12.6 10.6 10.2 12.6 7 13.8 C3.8 12.6 1.4 10.6 1.4 7.4 V3.2 Z" fill="none" stroke="#2b4b7a" stroke-width="1.6"/><path d="M7 4 L10 5.2 V7.4 L7 7.4 Z M7 7.4 H4 C4.2 9.4 5.4 10.6 7 11.2 Z" fill="#2a78c2"/></svg>
<div class="t" style="left:638.75px;top:454.42px;font-size:10px;color:#444444;transform:scaleX(0.8950);">IPS</div>
<svg class="a" style="left:873px;top:451px" width="14" height="14" viewBox="0 0 14 14"><circle cx="7" cy="7" r="7" fill="#4aa83a"/><path d="M3.8 7.2 L6 9.4 L10.3 4.9" fill="none" stroke="#fff" stroke-width="1.9"/></svg>
<div class="t" style="left:890.50px;top:454.42px;font-size:10px;color:#333;transform:scaleX(0.9220);">On</div>
<svg class="a" style="left:1111px;top:450.3px" width="16" height="16" viewBox="0 0 16 16"><circle cx="8" cy="8" r="6.6" fill="none" stroke="#5d6a88" stroke-width="1.4"/><path d="M4.5 8 H11 M8.2 5 L11.2 8 L8.2 11" fill="none" stroke="#5d6a88" stroke-width="1.4"/></svg>
<svg class="a" style="left:620px;top:472px" width="16" height="16" viewBox="0 0 16 16"><path d="M11.4 2.8 L6.5 1.2 L1.4 3 V7.2 C1.4 9.6 2.6 11.2 4.2 12.4" fill="none" stroke="#2b4b7a" stroke-width="1.7"/><circle cx="8.6" cy="9.2" r="4" fill="#2a78c2"/><path d="M6.8 9.2 L8.2 10.6 L10.6 8" fill="none" stroke="#9cc8ee" stroke-width="0.9"/></svg>
<div class="t" style="left:638.75px;top:475.51px;font-size:10px;color:#444444;transform:scaleX(0.8950);">Virus Scanner</div>
<svg class="a" style="left:873px;top:472px" width="14" height="14" viewBox="0 0 14 14"><circle cx="7" cy="7" r="7" fill="#4aa83a"/><path d="M3.8 7.2 L6 9.4 L10.3 4.9" fill="none" stroke="#fff" stroke-width="1.9"/></svg>
<div class="t" style="left:890.50px;top:475.51px;font-size:10px;color:#333;transform:scaleX(0.9220);">On</div>
<svg class="a" style="left:1111px;top:471.4px" width="16" height="16" viewBox="0 0 16 16"><circle cx="8" cy="8" r="6.6" fill="none" stroke="#5d6a88" stroke-width="1.4"/><path d="M4.5 8 H11 M8.2 5 L11.2 8 L8.2 11" fill="none" stroke="#5d6a88" stroke-width="1.4"/></svg>
<svg class="a" style="left:620px;top:494px" width="16" height="16" viewBox="0 0 16 16"><path d="M1.4 1 H7.2 L10.2 4 V7.2 A3.4 3.4 0 0 0 6 12.6 H1.4 Z" fill="#2b4b7a"/><circle cx="9" cy="10" r="2.6" fill="#fff" stroke="#2a78c2" stroke-width="1.3"/><path d="M10.9 11.9 L13 14" stroke="#2a78c2" stroke-width="1.5"/></svg>
<div class="t" style="left:638.75px;top:496.62px;font-size:10px;color:#444444;transform:scaleX(0.9089);">Advanced Threat Protection</div>
<svg class="a" style="left:873px;top:494px" width="14" height="14" viewBox="0 0 14 14"><circle cx="7" cy="7" r="7" fill="#4aa83a"/><path d="M3.8 7.2 L6 9.4 L10.3 4.9" fill="none" stroke="#fff" stroke-width="1.9"/></svg>
<div class="t" style="left:890.50px;top:496.62px;font-size:10px;color:#333;transform:scaleX(0.9220);">On</div>
<svg class="a" style="left:1111px;top:492.5px" width="16" height="16" viewBox="0 0 16 16"><circle cx="8" cy="8" r="6.6" fill="none" stroke="#5d6a88" stroke-width="1.4"/><path d="M4.5 8 H11 M8.2 5 L11.2 8 L8.2 11" fill="none" stroke="#5d6a88" stroke-width="1.4"/></svg>
<svg class="a" style="left:620px;top:515px" width="16" height="16" viewBox="0 0 16 16"><polygon points="13.31,9.15 11.42,10.13 11.25,12.25 9.13,12.05 7.85,13.75 6.17,12.43 4.17,13.16 3.47,11.16 1.40,10.69 1.89,8.62 0.40,7.10 1.94,5.63 1.50,3.55 3.59,3.14 4.34,1.16 6.32,1.94 8.03,0.68 9.27,2.41 11.39,2.27 11.50,4.40 13.36,5.43 12.30,7.28" fill="#2b4b7a"/><path d="M4.2 4.6 C6.5 3.6 9.5 5 9.8 7.6 M9.8 9.8 C7.5 10.8 4.5 9.4 4.2 6.8" fill="none" stroke="#5f7fae" stroke-width="0.9"/></svg>
<div class="t" style="left:638.75px;top:517.72px;font-size:10px;color:#444444;transform:scaleX(0.8950);">DNS Sinkhole</div>
<svg class="a" style="left:873px;top:515px" width="14" height="14" viewBox="0 0 14 14"><circle cx="7" cy="7" r="7" fill="#a5a5a5"/><rect x="6" y="3.3" width="2" height="7.4" rx="0.8" fill="#fff"/></svg>
<div class="t" style="left:890.50px;top:517.72px;font-size:10px;color:#333;transform:scaleX(0.9503);">Off</div>
<svg class="a" style="left:1111px;top:513.6px" width="16" height="16" viewBox="0 0 16 16"><circle cx="8" cy="8" r="6.6" fill="none" stroke="#5d6a88" stroke-width="1.4"/><path d="M4.5 8 H11 M8.2 5 L11.2 8 L8.2 11" fill="none" stroke="#5d6a88" stroke-width="1.4"/></svg>
<svg class="a" style="left:620px;top:536px" width="16" height="16" viewBox="0 0 16 16"><path d="M1.8 1.2 H7.2 L10.2 4.2 V6.6 M5.6 13 H1.8 V1.2" fill="none" stroke="#4a8fd0" stroke-width="1.4"/><circle cx="8.2" cy="9.4" r="3" fill="#d8e9f8" stroke="#3d7fc6" stroke-width="1.4"/><path d="M10.3 11.5 L12.8 14" stroke="#3d7fc6" stroke-width="1.6"/></svg>
<div class="t" style="left:638.75px;top:538.82px;font-size:10px;color:#444444;transform:scaleX(0.8950);">File Content Scan</div>
<svg class="a" style="left:873px;top:536px" width="14" height="14" viewBox="0 0 14 14"><circle cx="7" cy="7" r="7" fill="#a5a5a5"/><rect x="6" y="3.3" width="2" height="7.4" rx="0.8" fill="#fff"/></svg>
<div class="t" style="left:890.50px;top:538.82px;font-size:10px;color:#333;transform:scaleX(0.9503);">Off</div>
<svg class="a" style="left:1111px;top:534.7px" width="16" height="16" viewBox="0 0 16 16"><circle cx="8" cy="8" r="6.6" fill="none" stroke="#5d6a88" stroke-width="1.4"/><path d="M4.5 8 H11 M8.2 5 L11.2 8 L8.2 11" fill="none" stroke="#5d6a88" stroke-width="1.4"/></svg>
<svg class="a" style="left:620px;top:557px" width="16" height="16" viewBox="0 0 16 16"><path d="M11.8 3 L7 1.2 L1.6 3.2 V7.4 C1.6 10.2 3.4 12 5.4 13" fill="none" stroke="#2b4b7a" stroke-width="1.6"/><path d="M5.8 12.6 L12.2 6.2" stroke="#2a78c2" stroke-width="3.6" stroke-linecap="round"/><path d="M6.6 11.2 L11 6.8" stroke="#8cc4f0" stroke-width="0.8" stroke-dasharray="1.2 1"/></svg>
<div class="t" style="left:638.75px;top:559.91px;font-size:10px;color:#444444;transform:scaleX(0.8950);">Link Protection</div>
<svg class="a" style="left:873px;top:557px" width="14" height="14" viewBox="0 0 14 14"><circle cx="7" cy="7" r="7" fill="#a5a5a5"/><rect x="6" y="3.3" width="2" height="7.4" rx="0.8" fill="#fff"/></svg>
<div class="t" style="left:890.50px;top:559.91px;font-size:10px;color:#333;transform:scaleX(0.8893);">Off - applied in 0 Rules</div>
<svg class="a" style="left:1111px;top:555.8px" width="16" height="16" viewBox="0 0 16 16"><circle cx="8" cy="8" r="6.6" fill="none" stroke="#5d6a88" stroke-width="1.4"/><path d="M4.5 8 H11 M8.2 5 L11.2 8 L8.2 11" fill="none" stroke="#5d6a88" stroke-width="1.4"/></svg>
<svg class="a" style="left:620px;top:578px" width="16" height="16" viewBox="0 0 16 16"><circle cx="4" cy="9" r="2.9" fill="none" stroke="#2b4b7a" stroke-width="1.9"/><circle cx="11" cy="9" r="2.9" fill="none" stroke="#2b4b7a" stroke-width="1.9"/><path d="M2 7 C3 5.5 4.5 5 7.5 5 C10.5 5 12 5.5 13 7" fill="none" stroke="#2b4b7a" stroke-width="2"/></svg>
<div class="t" style="left:638.75px;top:581.01px;font-size:10px;color:#444444;transform:scaleX(0.8950);">Safe Search</div>
<svg class="a" style="left:873px;top:578px" width="14" height="14" viewBox="0 0 14 14"><circle cx="7" cy="7" r="7" fill="#a5a5a5"/><rect x="6" y="3.3" width="2" height="7.4" rx="0.8" fill="#fff"/></svg>
<div class="t" style="left:890.50px;top:581.01px;font-size:10px;color:#333;transform:scaleX(0.9503);">Off</div>
<svg class="a" style="left:1111px;top:576.9px" width="16" height="16" viewBox="0 0 16 16"><circle cx="8" cy="8" r="6.6" fill="none" stroke="#5d6a88" stroke-width="1.4"/><path d="M4.5 8 H11 M8.2 5 L11.2 8 L8.2 11" fill="none" stroke="#5d6a88" stroke-width="1.4"/></svg>
<svg class="a" style="left:620px;top:599px" width="16" height="16" viewBox="0 0 16 16"><rect x="1" y="2.2" width="13" height="10" rx="1.6" fill="#2b4b7a"/><path d="M5.6 4.8 L10.4 7.2 L5.6 9.6 Z" fill="#fff"/></svg>
<div class="t" style="left:638.75px;top:602.12px;font-size:10px;color:#444444;transform:scaleX(0.9093);">YouTube for Schools</div>
<svg class="a" style="left:873px;top:599px" width="14" height="14" viewBox="0 0 14 14"><circle cx="7" cy="7" r="7" fill="#a5a5a5"/><rect x="6" y="3.3" width="2" height="7.4" rx="0.8" fill="#fff"/></svg>
<div class="t" style="left:890.50px;top:602.12px;font-size:10px;color:#333;transform:scaleX(0.9503);">Off</div>
<svg class="a" style="left:1111px;top:598.0px" width="16" height="16" viewBox="0 0 16 16"><circle cx="8" cy="8" r="6.6" fill="none" stroke="#5d6a88" stroke-width="1.4"/><path d="M4.5 8 H11 M8.2 5 L11.2 8 L8.2 11" fill="none" stroke="#5d6a88" stroke-width="1.4"/></svg>
<div class="a" style="left:30px;top:612px;width:1146px;height:21px;background:#fff;border-top:1px solid #d4d4d4"></div>
<div class="a" style="left:31px;top:612px;width:57px;height:21px;background:#cfe3f7;border:1px solid #b8d3ee"></div>
<svg class="a" style="left:32px;top:613px" width="18" height="19" viewBox="0 0 18 19"><path d="M11.2 4.6 A5.2 5.2 0 1 0 11.6 12.2" fill="none" stroke="#2e7bc4" stroke-width="2.6"/><path d="M12.5 2.2 L16.6 9.6 H8.4 Z" fill="#f0a21a" stroke="#f0a21a" stroke-width="1.4" stroke-linejoin="round"/><path d="M12.5 4.6 V7.4" stroke="#fff" stroke-width="1.1"/><path d="M2 16.2 L4 14.6 L6 16.2 L8 14.6 L10 16.2 L12 14.6 L14 16.2 L16 14.6" fill="none" stroke="#3f6fae" stroke-width="1.1" stroke-dasharray="1.6 0.8"/></svg>
<div class="t" style="left:52.00px;top:620.12px;font-size:10px;color:#34425a;transform:scaleX(0.9081);">License</div>
<div class="a" style="left:692px;top:614px;width:1px;height:18px;background:#d6d6d6;"></div>
<div class="a" style="left:865px;top:614px;width:1px;height:18px;background:#d6d6d6;"></div>
<div class="a" style="left:1039px;top:614px;width:1px;height:18px;background:#d6d6d6;"></div>
<div class="t" style="left:696.70px;top:619.62px;font-size:10px;color:#333;transform:scaleX(0.9458);">SSL Secured (AES256-GCM-SHA384)</div>
<div class="t" style="left:870.00px;top:619.62px;font-size:10px;color:#333;transform:scaleX(0.9703);">Certificate: &lt;NOT LOADED&gt;</div>
<div class="t" style="left:1043.30px;top:619.62px;font-size:10px;color:#333;transform:scaleX(0.9568);">Box Time: 2:32 PM (Etc/UTC)</div>
<div class="a" style="left:30px;top:633px;width:1146px;height:4.5px;background:#33507a;"></div>
</body></html>
